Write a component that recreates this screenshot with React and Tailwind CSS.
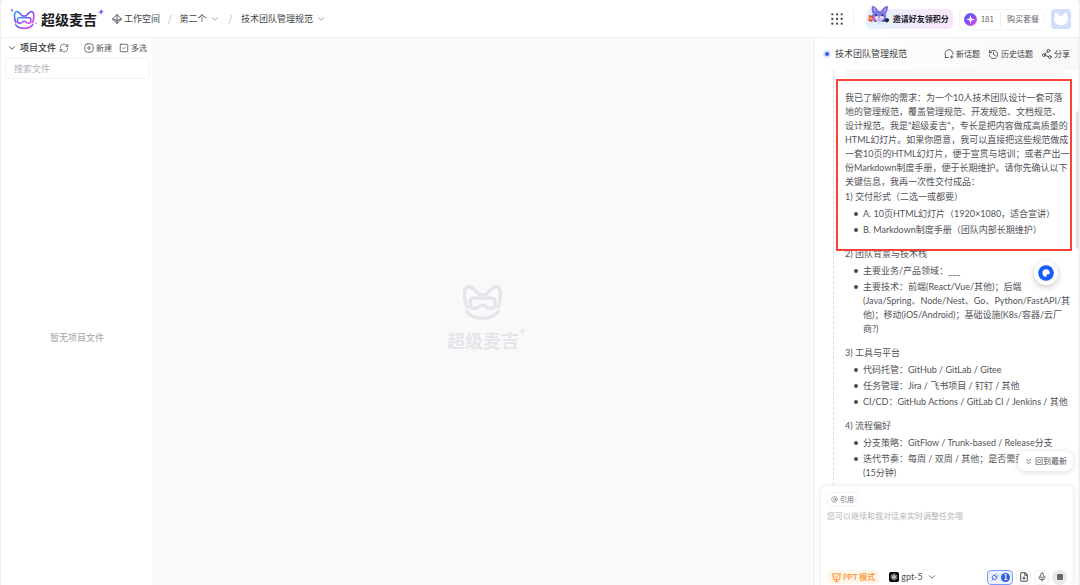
import React from "react";
import {
  AtSign, ChevronDown, ChevronsDown, FileUp, Mic, Plug, RefreshCw, SquareCheck, Share2, History,
} from "lucide-react";

const catPaths = (
  <>
    <path d="M12 68C2 46 2 16 11 8c9-5 25 9 36 23h21C79 17 95 3 104 8c9 8 9 38-1 60" />
    <path d="M30 41h55q9 0 9 9v11q0 10-10 10h-7c-8 0-10-10-19.500-10S46 71 38 71h-7q-10 0-10-10V50q0-9 9-9Z" />
    <path d="M11 80c17 27 76 27 93 0" />
  </>
);

function BrandLogo() {
  return (
    <svg viewBox="0 0 80 64" className="h-[22px] w-[28px] shrink-0" fill="none" aria-hidden="true">
      <defs>
        <linearGradient id="brand" x1="0" y1="0" x2="0.800" y2="1">
          <stop offset="0" stopColor="#35aaff" />
          <stop offset="0.450" stopColor="#7458f5" />
          <stop offset="1" stopColor="#e34be8" />
        </linearGradient>
      </defs>
      <g transform="translate(10 7) scale(.53 .52)" stroke="url(#brand)" strokeWidth="9" strokeLinecap="round" strokeLinejoin="round">
        {catPaths}
      </g>
      <path d="m5 1 1.500 4 4 1.500-4 1.500L5 12 3.500 8 0 6.500 3.500 5Z" fill="#6b6cf6" />
      <circle cx="75" cy="45" r="2" fill="#b45cf4" />
    </svg>
  );
}

function Sparkle({ className }) {
  return (
    <svg viewBox="0 0 12 12" className={className} fill="currentColor" aria-hidden="true">
      <path d="M7 0 7.900 4 12 4.500 8.200 7 6.500 12 4.500 7.500 0 7 4.300 4.500Z" />
    </svg>
  );
}

function WorkspaceIcon() {
  return (
    <svg viewBox="0 0 20 20" className="size-[10px]" fill="none" stroke="currentColor" strokeWidth="1.800" strokeLinejoin="round" aria-hidden="true">
      <path d="M10 1 19 10 10 19 1 10ZM10 1v18M1 10l9 3 9-3" />
    </svg>
  );
}

function NewFileIcon() {
  return (
    <svg viewBox="0 0 20 20" className="size-[10px]" fill="none" stroke="currentColor" strokeWidth="1.600" strokeLinecap="round" aria-hidden="true">
      <rect x="1.500" y="1.500" width="17" height="17" rx="6" />
      <path d="M10 6.500v7M6.500 10h7" />
    </svg>
  );
}

function NewTopicIcon() {
  return (
    <svg viewBox="0 0 20 20" className="size-[10px]" fill="none" stroke="currentColor" strokeWidth="1.600" strokeLinecap="round" strokeLinejoin="round" aria-hidden="true">
      <path d="M9 17H2l1.500-3A8 8 0 1 1 18 10.500M15.500 13.500v5M13 16h5" />
    </svg>
  );
}

function Mascot() {
  return (
    <svg viewBox="0 0 66 60" className="h-[20px] w-[22px]" aria-hidden="true">
      <path d="M18 50c-4-8 0-16 4-20l24 2c8 5 8 14 3 19Z" fill="#5655b9" />
      <path d="M16 29C10 17 9 5 14 2c7 1 14 9 17 16l9 1C43 11 50 3 59 3c3 8-3 20-8 27Z" fill="#6d6be2" />
      <path d="M19 20c-3-6-4-11-3-13 4 2 8 8 10 12ZM45 20c3-6 7-10 10-11 0 5-3 10-6 14Z" fill="#d394e8" />
      <path d="M12 31c4-14 37-17 43 0 1 12-12 19-22 18-10 0-21-6-21-18Z" fill="#7b7be9" />
      <path d="M20 36c5-6 9-1 13-1s10-5 15 1c-1 8-9 12-15 12s-12-4-13-12Z" fill="#f0ddf5" />
      <ellipse cx="24" cy="31" rx="2.500" ry="3" fill="#272451" />
      <ellipse cx="43" cy="31" rx="2.500" ry="3" fill="#272451" />
      <path d="M31 37h5l-2.500 3Z" fill="#42275b" />
      <path d="M29 42q5 5 9 0" stroke="#a0435f" strokeWidth="2" fill="none" />
      <path d="m3 30 13 3-3 18-12-3Z" fill="#f04a38" />
      <circle cx="8" cy="40" r="3.500" fill="#ffc64a" />
      <path d="M50 44c2-6 12-5 13 0s-5 9-10 8Z" fill="#252440" />
      <path d="M25 49h18l-4 9H28Z" fill="#d9e5fa" />
    </svg>
  );
}

function PresentationIcon() {
  return (
    <svg viewBox="0 0 20 20" className="size-[9px]" fill="none" stroke="currentColor" strokeWidth="2" strokeLinecap="round" strokeLinejoin="round" aria-hidden="true">
      <path d="M1 2h18M2.500 2v12h15V2M10 14v4M6 18.500h8M6 8l3 2 5-4" />
    </svg>
  );
}

function ModelIcon() {
  return (
    <span className="flex size-[10px] items-center justify-center rounded-[2px] bg-black text-white">
      <svg viewBox="0 0 24 24" className="size-[8px]" fill="none" stroke="currentColor" strokeWidth="1.600" aria-hidden="true">
        {[0, 60, 120, 180, 240, 300].map((a) => (
          <path key={a} transform={`rotate(${a} 12 12)`} d="M8 12V6.500a4.200 4.200 0 0 1 7.600-2.400M8 7l7 4" />
        ))}
      </svg>
    </span>
  );
}

function Crumb({ children }) {
  return (
    <button className="flex items-center gap-[3px] whitespace-nowrap">
      {children}
      <ChevronDown className="size-[10px] text-[#8b8b90]" strokeWidth={2} />
    </button>
  );
}

function TopBar() {
  return (
    <header className="flex h-[38px] shrink-0 items-center justify-between border-b border-[#f0f0f1] pt-px pr-[8px] pl-[9px]">
      <div className="flex items-center">
        <a href="#home" className="flex items-center gap-[3px]">
          <BrandLogo />
          <span className="text-[14px] leading-[20px] font-bold text-[#1c1b23]">超级麦吉</span>
          <Sparkle className="-ml-[2px] mb-[14px] size-[6px] text-[#7c4df3]" />
        </a>
        <nav aria-label="路径" className="ml-[8px] flex items-center text-[9px] leading-[14px] text-[#45454b]">
          <a href="#workspace" className="flex items-center gap-[2px]"><WorkspaceIcon />工作空间</a>
          <span className="mx-[8px] text-[#aaaaae]">/</span>
          <Crumb>第二个</Crumb>
          <span className="mx-[9px] text-[#aaaaae]">/</span>
          <Crumb>技术团队管理规范</Crumb>
        </nav>
      </div>
      <div className="flex items-center text-[8px] leading-[12px]">
        <button aria-label="应用" className="mr-[10px]">
          <svg viewBox="0 0 12 12" className="size-[12px] fill-[#48484e]" aria-hidden="true">
            {[1.300, 6, 10.700].map((y) => [1.300, 6, 10.700].map((x) => <circle key={`${x}-${y}`} cx={x} cy={y} r="1.150" />))}
          </svg>
        </button>
        <span className="mr-[12px] h-[16px] w-px bg-[#f0f0f1]" />
        <button className="relative mr-[6px] h-[20px] rounded-[5px] bg-linear-to-r from-[#e2f2fd] via-[#eeebfd] to-[#fbe6f8] pr-[4px] pl-[27px] font-bold whitespace-nowrap text-[#222128]">
          <span className="absolute bottom-[4px] left-[2px]"><Mascot /></span>
          邀请好友领积分
        </button>
        <div className="mr-[7px] flex h-[21px] items-center rounded-[5px] border border-[#f4f4f5] px-[4px] text-[#66666b]">
          <span className="mr-[4px] flex size-[13px] items-center justify-center rounded-full bg-linear-to-br from-[#3d65f7] via-[#8a47f2] to-[#ec52dc]">
            <svg viewBox="0 0 12 12" className="size-[9px] fill-white" aria-hidden="true"><path d="M6 0 7.300 4.700 12 6 7.300 7.300 6 12 4.700 7.300 0 6 4.700 4.700Z" /></svg>
          </span>
          <span>181</span>
          <span className="mr-[6px] ml-[6px] h-[14px] w-px bg-[#ededef]" />
          <button className="whitespace-nowrap">购买套餐</button>
        </div>
        <button aria-label="账户" className="flex size-[20px] items-center justify-center rounded-[4px] bg-[#d1dffc]">
          <svg viewBox="0 0 20 20" className="size-[16px] fill-white" aria-hidden="true"><path d="M3 2c2 0 4 2 5 4h4c1-2 3-4 5-4 1 3 2 8 1 11-2 6-14 6-16 0C1 10 2 5 3 2Z" /></svg>
        </button>
      </div>
    </header>
  );
}

function FilePanel() {
  return (
    <aside className="flex w-[153px] shrink-0 flex-col border-r border-[#f3f3f4] bg-white">
      <div className="flex h-[20px] items-center pr-[6px] pl-[6px] text-[8px] whitespace-nowrap text-[#55555a]">
        <button className="flex items-center gap-[3px] text-[9px] leading-[14px] font-medium text-[#303036]">
          <ChevronDown className="size-[10px]" strokeWidth={2} />项目文件
        </button>
        <button aria-label="刷新" className="ml-[3px]"><RefreshCw className="size-[10px]" strokeWidth={1.800} /></button>
        <button className="ml-auto flex items-center gap-[2px]"><NewFileIcon />新建</button>
        <button className="ml-[7px] flex items-center gap-[2px]"><SquareCheck className="size-[10px]" strokeWidth={2} />多选</button>
      </div>
      <input aria-label="搜索文件" placeholder="搜索文件" className="mr-[3px] ml-[4px] h-[21px] min-w-0 rounded-[4px] border border-[#f3f3f4] px-[8px] text-[9px] outline-none placeholder:text-[#b3b3b7]" />
      <p className="flex flex-1 items-center justify-center pt-[12px] text-[9px] text-[#a2a2a6]">暂无项目文件</p>
    </aside>
  );
}

function Canvas() {
  return (
    <main className="flex min-w-0 flex-1 flex-col items-center justify-center bg-[#f9f9f9] pt-[12px] text-[#e5e6eb]">
      <svg viewBox="0 0 115 105" className="mr-[3px] mb-[8px] h-[36px] w-[39px]" fill="none" stroke="currentColor" strokeWidth="10" strokeLinecap="round" strokeLinejoin="round" aria-hidden="true">{catPaths}</svg>
      <div className="flex items-start pl-[5px]">
        <span className="text-[18px] leading-[24px] font-bold">超级麦吉</span>
        <Sparkle className="size-[7px]" />
      </div>
    </main>
  );
}

const sections = [
  { title: "1) 交付形式（二选一或都要）", items: ["A. 10页HTML幻灯片（1920×1080，适合宣讲）", "B. Markdown制度手册（团队内部长期维护）"] },
  { title: "2) 团队背景与技术栈", items: ["主要业务/产品领域：___", "主要技术：前端(React/Vue/其他)；后端\n(Java/Spring、Node/Nest、Go、Python/FastAPI/其\n他)；移动(iOS/Android)；基础设施(K8s/容器/云厂\n商?)"] },
  { title: "3) 工具与平台", items: ["代码托管：GitHub / GitLab / Gitee", "任务管理：Jira / 飞书项目 / 钉钉 / 其他", "CI/CD：GitHub Actions / GitLab CI / Jenkins / 其他"] },
  { title: "4) 流程偏好", items: ["分支策略：GitFlow / Trunk-based / Release分支", "迭代节奏：每周 / 双周 / 其他；是否需要\n(15分钟)"] },
];

const intro = `我已了解你的需求：为一个10人技术团队设计一套可落
地的管理规范，覆盖管理规范、开发规范、文档规范、
设计规范。我是"超级麦吉"，专长是把内容做成高质量的
HTML幻灯片。如果你愿意，我可以直接把这些规范做成
一套10页的HTML幻灯片，便于宣贯与培训；或者产出一
份Markdown制度手册，便于长期维护。请你先确认以下
关键信息，我再一次性交付成品：`;

function Conversation() {
  return (
    <div className="relative min-h-0 flex-1">
      <div className="h-full overflow-hidden pl-[18px]">
        <div className="h-full border-l border-dashed border-[#dedee1] pl-[11px] font-['Lato','Noto_Sans_CJK_SC',sans-serif] text-[9px] leading-[14px] whitespace-pre text-[#525258]">
          <div className="mr-[14px] h-[6px] rounded-b-[5px] bg-[#f8f8f8]" />
          <p className="mt-[15px] mb-px">{intro}</p>
          <div className="flex flex-col gap-[10px]">
            {sections.map((s) => (
              <section key={s.title}>
                <h3>{s.title}</h3>
                <ul className="mt-[3px] flex flex-col gap-[2px]">
                  {s.items.map((t) => (
                    <li key={t} className="flex gap-[5px] pl-[9px]">
                      <span className="mt-[5px] size-[4px] shrink-0 rounded-full bg-[#4b4b50]" />
                      <span>{t}</span>
                    </li>
                  ))}
                </ul>
              </section>
            ))}
          </div>
        </div>
      </div>
      <div className="absolute top-[9px] right-[6px] h-[172px] w-[236px] border-2 border-[#fb4238]" />
      <div className="absolute top-[41px] -right-px h-[138px] w-[3px] rounded-full bg-[#e3e3e5]" />
      <button aria-label="助手" className="absolute top-[191px] right-[20px] flex size-[24px] items-center justify-center rounded-full bg-white shadow-[0_2px_6px_rgba(0,0,0,0.22)]">
        <svg viewBox="0 0 16 16" className="size-[16px]" aria-hidden="true">
          <circle cx="8" cy="8" r="7.800" fill="#155bfa" />
          <path d="M8 4.200A3.800 3.800 0 1 0 8.500 11.800C9 11 8 10 9 9.500s2.500.5 2.800-1.500A3.800 3.800 0 0 0 8 4.200Z" fill="#fff" />
        </svg>
      </button>
      <button className="absolute right-[5px] bottom-[14px] flex h-[20px] items-center gap-[2px] rounded-[8px] bg-white px-[6px] text-[8px] whitespace-nowrap text-[#515157] shadow-[0_1px_6px_rgba(0,0,0,0.14)]">
        <ChevronsDown className="size-[9px]" strokeWidth={2} />回到最新
      </button>
    </div>
  );
}

function Composer() {
  return (
    <form className="relative mr-[4px] ml-[5px] flex h-[100px] shrink-0 flex-col rounded-t-[6px] border border-b-0 border-[#f2f2f3] bg-white px-[6px] pt-[6px] shadow-[0_0_5px_rgba(0,0,0,0.07)]">
      <button type="button" className="flex h-[15px] items-center gap-[2px] self-start rounded-[4px] border border-[#f3f3f4] px-[3px] text-[7px] text-[#6c6c71]">
        <AtSign className="size-[7px]" strokeWidth={2} />引用
      </button>
      <textarea aria-label="消息" placeholder="您可以继续和我对话来实时调整任务哦" className="mt-[3px] min-h-0 w-full flex-1 resize-none text-[8px] leading-[12px] outline-none placeholder:text-[#b6b6ba]" />
      <div className="flex h-[16px] shrink-0 items-center text-[#505056]">
        <button type="button" className="flex h-[14px] items-center gap-[2px] rounded-[5px] bg-[#fff6eb] px-[5px] font-['Lato','Noto_Sans_CJK_SC',sans-serif] text-[8px] font-medium whitespace-nowrap text-[#ff8a20]">
          <PresentationIcon />PPT 模式
        </button>
        <button type="button" className="ml-[9px] flex items-center gap-[2px] font-['Lato','Noto_Sans_CJK_SC',sans-serif] text-[9px] leading-[14px]">
          <ModelIcon />gpt-5<ChevronDown className="ml-[2px] size-[10px]" strokeWidth={2} />
        </button>
        <div className="ml-auto flex items-center gap-[3px]">
          <button type="button" aria-label="插件" className="flex h-[15px] items-center gap-[2px] rounded-[4px] border border-[#7b9afb] bg-[#edf2ff] px-[2px] text-[#315cec]">
            <Plug className="size-[9px] rotate-45" strokeWidth={2.500} />
            <span className="flex size-[9px] items-center justify-center rounded-full bg-[#315cec] text-[7px] leading-[9px] font-bold text-white">1</span>
          </button>
          <button type="button" aria-label="上传文件" className="flex size-[15px] items-center justify-center rounded-[4px] border border-[#f3f3f4]"><FileUp className="size-[10px]" strokeWidth={2.500} /></button>
          <button type="button" aria-label="语音" className="flex size-[15px] items-center justify-center rounded-[4px] border border-[#f3f3f4]"><Mic className="size-[10px]" strokeWidth={2} /></button>
          <button type="button" aria-label="停止" className="flex size-[15px] items-center justify-center rounded-full bg-[#e9e9ea]"><span className="size-[6px] rounded-[1px] bg-[#67676c]" /></button>
        </div>
      </div>
    </form>
  );
}

function ChatPanel() {
  return (
    <section className="flex w-[265px] shrink-0 flex-col border-x border-[#f1f1f2] bg-white">
      <div className="flex h-[32px] shrink-0 items-center justify-between bg-linear-to-r from-white to-[#f8f8f8] pr-[8px] pl-[8px] whitespace-nowrap text-[#3d3d43]">
        <h2 className="flex items-center gap-[4px] text-[9px] leading-[14px] font-normal">
          <span className="size-[8px] rounded-full border-[2px] border-[#dbe4ff] bg-[#315cec]" />技术团队管理规范
        </h2>
        <div className="flex items-center gap-[8px] text-[8px] leading-[12px]">
          <button className="flex items-center gap-[2px]"><NewTopicIcon />新话题</button>
          <button className="flex items-center gap-[2px]"><History className="size-[11px]" strokeWidth={1.800} />历史话题</button>
          <button className="flex items-center gap-[2px]"><Share2 className="size-[11px] -rotate-12" strokeWidth={1.800} />分享</button>
        </div>
      </div>
      <Conversation />
      <Composer />
    </section>
  );
}

export default function App() {
  return (
    <div className="h-screen overflow-hidden bg-[#f0f0f1] pr-px pl-px font-['Noto_Sans_CJK_SC',sans-serif]">
      <div className="flex h-full flex-col overflow-hidden rounded-t-[5px] bg-white">
        <TopBar />
        <div className="flex min-h-0 flex-1 bg-[#f9f9f9]">
          <FilePanel />
          <Canvas />
          <ChatPanel />
        </div>
      </div>
    </div>
  );
}
